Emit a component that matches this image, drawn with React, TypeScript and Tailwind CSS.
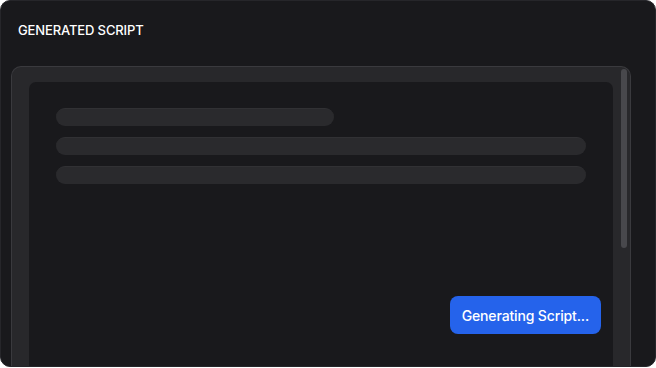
const Bar = ({ w }: { w: string }) => (
  <div className={`h-[18px] rounded-full bg-[#2a2a2d] border-t border-[#313134] ${w}`} />
);

export default function App() {
  return (
    <div className="w-[656px] h-[368px] bg-white" style={{ fontFamily: "Inter, 'Liberation Sans', sans-serif" }}>
      <div className="h-[367px] rounded-[10px] border border-[#26262a] bg-[#19191c] overflow-hidden flex flex-col">
        <div className="h-[65px] shrink-0 px-[17px] pt-[21px]">
          <h2 className="text-[13px] leading-[16px] font-medium text-white tracking-[-0.01em]">GENERATED SCRIPT</h2>
        </div>

        <div className="ml-[10px] mr-[24px] flex-1 flex rounded-t-[10px] border border-b-0 border-[#3a3a3e] bg-[#28282b] pl-[17px]">
          <div className="flex-1 mt-[15px] rounded-t-[7px] bg-[#19191c] px-[12px] pt-[26px] flex flex-col">
            <div className="mx-[15px] flex flex-col gap-[11px]">
              <Bar w="w-[278px]" />
              <Bar w="w-full" />
              <Bar w="w-full" />
            </div>
            <button className="self-end mt-[112px] h-[38px] px-[12px] rounded-[8px] bg-[#2563eb] text-white text-[14px] font-medium tracking-[-0.01em]">
              Generating Script...
            </button>
          </div>
          <div className="w-[17px] shrink-0 pl-[8px] pt-[2px]">
            <div className="w-[6px] h-[179px] rounded-full bg-[#48484c]" />
          </div>
        </div>
      </div>
    </div>
  );
}
